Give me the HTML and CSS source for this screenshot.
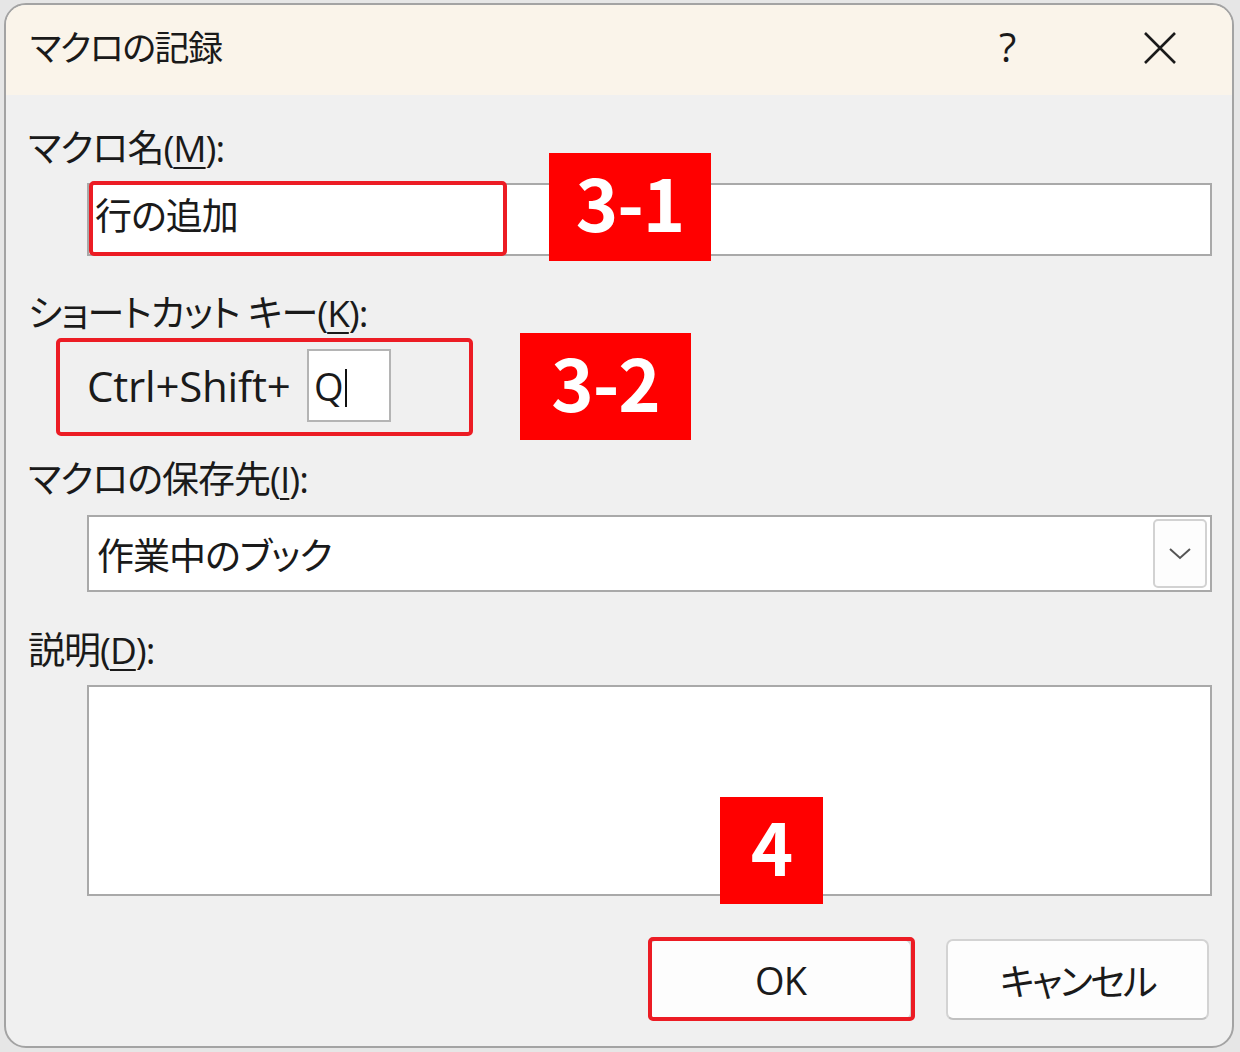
FILE: index.html
```html
<!DOCTYPE html>
<html lang="ja">
<head>
<meta charset="utf-8">
<title>マクロの記録</title>
<link rel="stylesheet" href="styles.css">
</head>
<body>
<div class="window">
  <div class="titlebar">
    <span class="title">マクロの記録</span>
    <span class="help">?</span>
    <span class="close">
      <svg width="34" height="34" viewBox="0 0 34 34"><path d="M2 2 L32 32 M32 2 L2 32" stroke="#1a1a1a" stroke-width="2.6" fill="none"/></svg>
    </span>
  </div>
  <div class="content">
    <div class="label lbl-name">マクロ名(<u>M</u>):</div>
    <div class="field input-name"><span class="val">行の追加</span></div>

    <div class="label lbl-short">ショートカット キー(<u>K</u>):</div>
    <div class="shortcut">
      <span class="ctrl">Ctrl+Shift+</span>
      <span class="keybox">Q<span class="caret"></span></span>
    </div>

    <div class="label lbl-store">マクロの保存先(<u>I</u>):</div>
    <div class="field select"><span class="val">作業中のブック</span>
      <span class="dropbtn"><svg width="24" height="14" viewBox="0 0 24 14"><path d="M2 2 L12 11 L22 2" stroke="#555" stroke-width="2" fill="none"/></svg></span>
    </div>

    <div class="label lbl-desc">説明(<u>D</u>):</div>
    <div class="field textarea"></div>

    <div class="buttons">
      <div class="btn">OK</div>
      <div class="btn btn-cancel">キャンセル</div>
    </div>
  </div>

  <div class="redbox rb1"></div>
  <div class="redbox rb2"></div>
  <div class="redbox rb3"></div>
  <div class="badge bd1">3-1</div>
  <div class="badge bd2">3-2</div>
  <div class="badge bd3">4</div>
</div>
</body>
</html>
```

FILE: styles.css
```css
html, body {
  margin: 0;
  padding: 0;
}
body {
  width: 1240px;
  height: 1052px;
  background: #e6e6e6;
  overflow: hidden;
  font-family: "Open Sans", "Noto Sans CJK JP", sans-serif;
  font-feature-settings: "palt";
  color: #1a1a1a;
}
.window {
  position: relative;
  box-sizing: border-box;
  margin: 3px 0 0 4px;
  width: 1230px;
  height: 1045px;
  border: 2px solid #a3a3a3;
  border-radius: 22px;
  background: #f0f0f0;
  overflow: hidden;
  display: flex;
  flex-direction: column;
}
.titlebar {
  height: 90px;
  background: #faf4ea;
  display: flex;
  align-items: center;
  padding-left: 24px;
  flex-shrink: 0;
}
.title {
  font-family: "Noto Sans CJK JP", sans-serif;
  font-size: 35px;
  letter-spacing: -1.5px;
  line-height: 40px;
  flex: 1;
  margin-top: -8px;
}
.help {
  font-size: 40px;
  line-height: 40px;
  width: 30px;
  margin-right: 114px;
  margin-top: -6px;
}
.close {
  display: flex;
  margin-right: 55px;
  margin-top: -4px;
}
.content {
  padding: 0 20px 0 22px;
  display: flex;
  flex-direction: column;
}
.label {
  font-size: 37px;
  line-height: 40px;
  height: 40px;
  letter-spacing: -1px;
}
.label u {
  text-underline-offset: 5px;
  text-decoration-thickness: 2px;
}
.lbl-name { margin-top: 33px; }
.lbl-short { margin-top: 37px; }
.lbl-store { margin-top: 37px; }
.lbl-desc { margin-top: 38px; }
.field {
  box-sizing: border-box;
  margin-left: 59px;
  background: #ffffff;
  border: 2px solid #a9a9a9;
}
.input-name {
  margin-top: 15px;
  height: 73px;
  display: flex;
  align-items: center;
  padding-left: 6px;
  padding-bottom: 12px;
}
.val {
  font-family: "Noto Sans CJK JP", sans-serif;
  font-size: 37px;
  letter-spacing: -1px;
  line-height: 40px;
}
.shortcut {
  margin-top: 16px;
  margin-left: 59px;
  height: 73px;
  display: flex;
  align-items: center;
}
.ctrl {
  font-size: 42px;
  line-height: 40px;
  letter-spacing: -0.2px;
  width: 220px;
}
.keybox {
  box-sizing: border-box;
  width: 84px;
  height: 73px;
  background: #fff;
  border: 2px solid #b4b4b4;
  display: flex;
  align-items: center;
  padding-left: 5px;
  font-size: 38px;
  line-height: 40px;
}
.caret {
  display: inline-block;
  width: 2px;
  height: 38px;
  background: #111;
  margin-left: 1px;
  margin-top: 4px;
}
.select {
  margin-top: 16px;
  height: 77px;
  display: flex;
  align-items: center;
  padding-left: 8px;
  padding-right: 3px;
}
.select .val { flex: 1; }
.dropbtn {
  box-sizing: border-box;
  width: 54px;
  height: 69px;
  border: 2px solid #d2d2d2;
  border-radius: 5px;
  background: #fdfdfd;
  display: flex;
  align-items: center;
  justify-content: center;
}
.textarea {
  margin-top: 15px;
  height: 211px;
}
.buttons {
  margin-top: 43px;
  display: flex;
  justify-content: flex-end;
  gap: 34px;
  margin-right: 3px;
}
.btn {
  box-sizing: border-box;
  width: 263px;
  height: 81px;
  background: #fdfdfd;
  border: 2px solid #d3d3d3;
  border-bottom-color: #c0c0c0;
  border-radius: 7px;
  display: flex;
  align-items: center;
  justify-content: center;
  font-size: 38px;
  letter-spacing: -1px;
}
.btn-cancel {
  font-size: 37px;
  letter-spacing: -2.5px;
}
.redbox {
  position: absolute;
  box-sizing: border-box;
  border: 4px solid #ec1c24;
  border-radius: 5px;
}
.rb1 { left: 83px; top: 176px; width: 418px; height: 75px; }
.rb2 { left: 50px; top: 333px; width: 417px; height: 98px; }
.rb3 { left: 642px; top: 932px; width: 267px; height: 84px; }
.badge {
  position: absolute;
  box-sizing: border-box;
  padding-bottom: 12px;
  background: #ff0000;
  color: #ffffff;
  font-family: "Noto Sans CJK JP", sans-serif;
  font-weight: 700;
  font-size: 72px;
  letter-spacing: -1px;
  line-height: 1;
  display: flex;
  align-items: center;
  justify-content: center;
  font-feature-settings: normal;
}
.bd1 { left: 543px; top: 148px; width: 162px; height: 108px; }
.bd2 { left: 514px; top: 328px; width: 171px; height: 107px; }
.bd3 { left: 714px; top: 792px; width: 103px; height: 107px; }
```
